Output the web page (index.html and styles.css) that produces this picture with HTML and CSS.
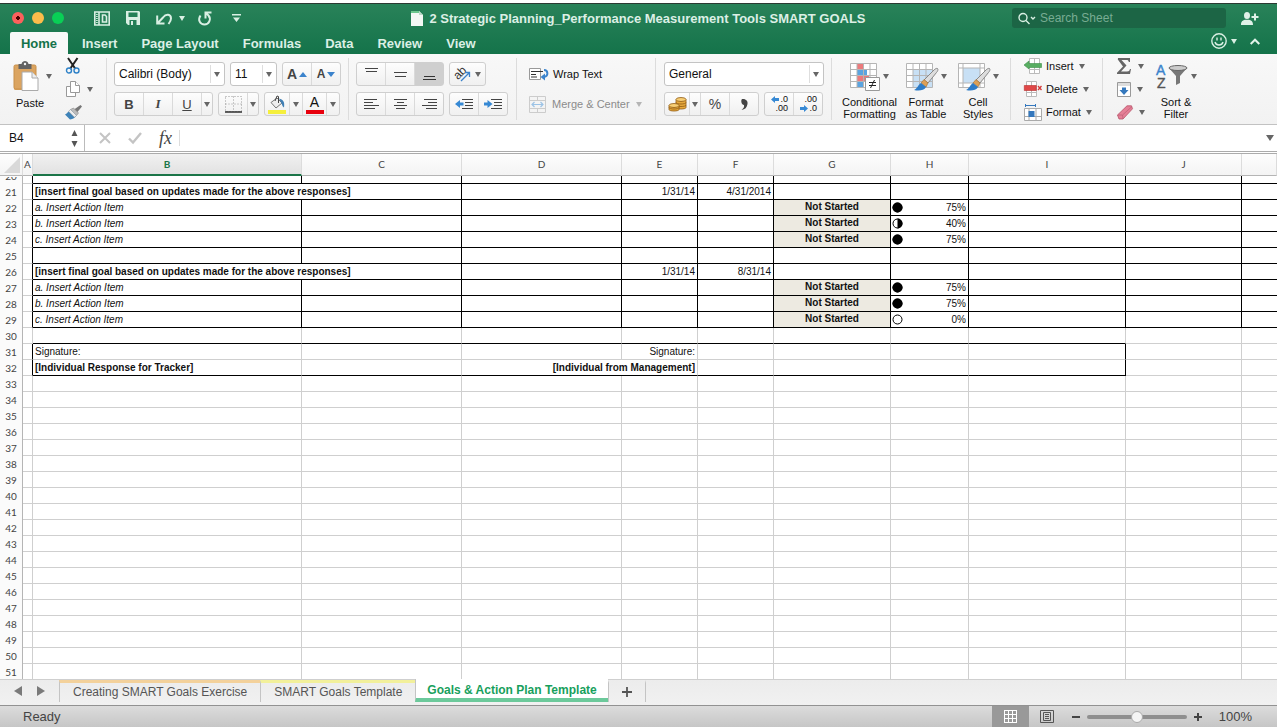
FILE: index.html
```html
<!DOCTYPE html>
<html lang="en">
<head>
    <meta charset="UTF-8">
    <meta name="viewport" content="width=device-width, initial-scale=1.0">
    <title>2 Strategic Planning_Performance Measurement Tools SMART GOALS</title>
    <link rel="stylesheet" href="styles.css">
</head>
<body>
<div class="app">
    <header class="header">
        <div class="titlebar">
            <div class="tools">
                <div class="lights">
                    <button class="light red" aria-label="Close"></button>
                    <button class="light yellow" aria-label="Minimize"></button>
                    <button class="light green" aria-label="Zoom window"></button>
                </div>
                <button class="quick" aria-label="Gallery">
                    <svg width="16" height="15" viewBox="0 0 16 15" fill="none" stroke="#d9efe3" stroke-width="1.6"><path d="M.8 1h14.4v13H.8zM5 1v13M8.500 4h2.500l1.500 1.500V11h-4z"/><path d="M2.900 3v9" stroke-dasharray="1 1"/></svg>
                </button>
                <button class="quick" aria-label="Save">
                    <svg width="14" height="14" viewBox="0 0 14 14"><path d="M0 0h13l1 1v13H2l-2-2z" fill="#d9efe3"/><path d="M2.500 1.500h9v4.500h-9zM3.500 9h7v5h-7z" fill="#237f56"/><path d="M5 10h2v4H5z" fill="#d9efe3"/></svg>
                </button>
                <button class="quick undo" aria-label="Undo">
                    <svg width="16" height="13" viewBox="0 0 16 13" fill="none" stroke="#d9efe3" stroke-width="2"><path d="M1.200 3.500v8h7.300M1.800 11L7 5.500C10 1.500 15 2 15 6.500c0 2-1 3.500-2.500 5.500"/></svg>
                    <i class="caret"></i>
                </button>
                <button class="quick" aria-label="Redo">
                    <svg width="14" height="15" viewBox="0 0 14 15" fill="none" stroke="#d9efe3" stroke-width="2"><path d="M2.500 4.500C-.5 9 2 13.500 6.500 13.500S13.500 8 10.500 4.500L7.500 1.500M13.500 1.500h-6v6"/></svg>
                </button>
                <button class="quick more" aria-label="Customize toolbar">
                    <svg width="9" height="8" viewBox="0 0 9 8"><path d="M0 0h9v1.500H0zM1 3.500h7L4.500 8z" fill="#d9efe3"/></svg>
                </button>
            </div>
            <div class="title">
                <svg width="12" height="15" viewBox="0 0 12 15"><path d="M0 0h8l4 4v11H0z" fill="#f4f8f5"/><path d="M0 0h8v2H0z" fill="#6cc78e"/><path d="M8 0v4h4z" fill="#bcd9c8"/></svg>
                <span>2 Strategic Planning_Performance Measurement Tools SMART GOALS</span>
            </div>
            <div class="right-tools">
                <div class="search">
                    <svg width="18" height="13" viewBox="0 0 18 13" fill="none" stroke="#d9efe3" stroke-width="1.400"><circle cx="5" cy="5.500" r="4"/><path d="M8 8.500l3.500 3.500M13 5l2 2 2-2"/></svg>
                    <input type="text" placeholder="Search Sheet" aria-label="Search Sheet">
                </div>
                <button class="share" aria-label="Share">
                    <svg width="18" height="13" viewBox="0 0 18 13" fill="#e0f1e8"><ellipse cx="6" cy="3.500" rx="3" ry="3.500"/><path d="M0 13c0-4 2-4.500 4-5.200h4c2 .7 4 1.200 4 5.200z"/><path d="M13 1.500h2v2.500h2.500v2H15v2.500h-2V6h-2.500V4H13z"/></svg>
                </button>
            </div>
        </div>
        <nav class="tabs">
            <button class="tab active">Home</button>
            <button class="tab">Insert</button>
            <button class="tab">Page Layout</button>
            <button class="tab">Formulas</button>
            <button class="tab">Data</button>
            <button class="tab">Review</button>
            <button class="tab">View</button>
            <div class="tabs-right">
                <button class="quick" aria-label="Feedback">
                    <svg width="16" height="16" viewBox="0 0 16 16" fill="none" stroke="#d9efe3" stroke-width="1.400"><circle cx="8" cy="8" r="7.200"/><path d="M4 9c1 4 7 4 8 0M6 4.500v3M10 4.500v3"/></svg>
                    <i class="caret"></i>
                </button>
                <button class="quick" aria-label="Collapse ribbon">
                    <svg width="10" height="7" viewBox="0 0 10 7" fill="none" stroke="#e3f3ea" stroke-width="2"><path d="M.7 6L5 1.700 9.300 6"/></svg>
                </button>
            </div>
        </nav>
    </header>

    <section class="ribbon">
        <div class="group clipboard">
            <div class="big">
                <button class="plain">
                    <span class="art"><svg width="25" height="30" viewBox="0 0 25 30"><rect x="0" y="4" width="22" height="25" rx="1.500" fill="#dba460"/><rect x="0" y="4" width="22" height="24" rx="1.500" fill="none" stroke="#c88f48"/><path d="M4.500 3h3C8 .8 9.500 0 11 0s3 .8 3.500 3h3v5h-13z" fill="#636363"/><circle cx="11" cy="3" r="1.200" fill="#f5f5f5"/><path d="M8 11h10l6 6v12.500H8z" fill="#fff" stroke="#aaa"/><path d="M18 11v6h6" fill="#eee" stroke="#aaa"/></svg></span>
                    <span class="label">Paste</span>
                </button>
                <i class="caret"></i>
            </div>
            <div class="stack">
                <button class="plain" aria-label="Cut"><svg width="16" height="16" viewBox="0 0 16 16" fill="none"><path d="M3 0l7.500 11M12.500 0L5 11" stroke="#222" stroke-width="2"/><circle cx="4" cy="12.500" r="2.500" stroke="#2f82c8" stroke-width="1.400"/><circle cx="11.500" cy="12.500" r="2.500" stroke="#2f82c8" stroke-width="1.400"/></svg></button>
                <button class="plain" aria-label="Copy"><svg width="16" height="16" viewBox="0 0 16 16" fill="#fff" stroke="#999"><path d="M1.500 5.500h5l4 4v6h-9z"/><path d="M5.500.5h5l4 4v7h-9z"/><path d="M10.500.5v4h4"/></svg><i class="caret"></i></button>
                <button class="plain" aria-label="Format painter"><svg width="17" height="15" viewBox="0 0 17 15"><path d="M15.500 0L17 1.500l-5 6-3-3z" fill="#777"/><path d="M5.500 4.500l3-1.500 5 5-2 2.500z" fill="#bbb" stroke="#888" stroke-width=".6"/><path d="M5.500 4.500l6 6C10 13 8 14 5 14.500L0 9.500c2-1 3-2.500 5.500-5z" fill="#3f83b8"/><path d="M5.500 4.500l6 6-2 1.800-6-6z" fill="#eee" stroke="#999" stroke-width=".5"/></svg></button>
            </div>
        </div>

        <div class="group font">
            <div class="row">
                <span class="combo family"><select aria-label="Font"><option>Calibri (Body)</option></select><i class="caret"></i></span>
                <span class="combo size"><select aria-label="Font size"><option>11</option></select><i class="caret"></i></span>
                <div class="btns">
                    <button aria-label="Grow font"><span class="grow">A</span><svg width="8" height="5" viewBox="0 0 8 5"><path d="M0 5l4-5 4 5z" fill="#3b83cc"/></svg></button>
                    <button aria-label="Shrink font"><span class="shrink">A</span><svg width="8" height="5" viewBox="0 0 8 5"><path d="M0 0h8L4 5z" fill="#3b83cc"/></svg></button>
                </div>
            </div>
            <div class="row">
                <div class="btns">
                    <button class="bold">B</button>
                    <button class="italic">I</button>
                    <button class="underline">U</button>
                    <button class="drop" aria-label="Underline options"><i class="caret"></i></button>
                </div>
                <div class="btns">
                    <button aria-label="Borders"><svg width="17" height="17" viewBox="0 0 17 17" fill="none" stroke="#999"><path d="M.5.5h16v15H.5zM8.500.5v15M.5 8h16" stroke-dasharray="1 2"/><path d="M0 16h17" stroke="#222" stroke-width="1.400"/></svg></button>
                    <button class="drop" aria-label="Border options"><i class="caret"></i></button>
                </div>
                <div class="btns colors">
                    <button aria-label="Fill color"><svg width="18" height="19" viewBox="0 0 18 19"><path d="M3 7.500L9 3l5 5-6 5z" fill="#eee" stroke="#777"/><path d="M7 6l2-5 1.500.5V8" fill="none" stroke="#444"/><path d="M11 3.500c4 1 6 3 5 9-2-1-2-4-3-5z" fill="#4180b5"/><path d="M0 15h18v4H0z" fill="#f5ef3c"/></svg></button>
                    <button class="drop" aria-label="Fill color options"><i class="caret"></i></button>
                    <button class="text-color" aria-label="Font color"><span>A</span></button>
                    <button class="drop" aria-label="Font color options"><i class="caret"></i></button>
                </div>
            </div>
        </div>

        <div class="group align">
            <div class="row">
                <div class="btns">
                    <button aria-label="Top align"><svg width="13" height="14" viewBox="0 0 13 14" stroke="#444"><path d="M0 1.500h13M1 4.500h11"/></svg></button>
                    <button aria-label="Middle align"><svg width="13" height="14" viewBox="0 0 13 14" stroke="#444"><path d="M0 5.500h13M1 9.500h11"/></svg></button>
                    <button class="pressed" aria-label="Bottom align"><svg width="13" height="14" viewBox="0 0 13 14" stroke="#333"><path d="M1 9.500h11M0 12.500h13"/></svg></button>
                </div>
                <div class="btns">
                    <button class="orient" aria-label="Orientation"><svg width="18" height="18" viewBox="0 0 18 18"><text x="0" y="12" transform="rotate(-45 6 9)" font-family="Liberation Sans" font-size="12" fill="#333">ab</text><path d="M7 16l8-8M11 7.500h4.500V12" fill="none" stroke="#3b83cc" stroke-width="1.300"/></svg><i class="caret"></i></button>
                </div>
            </div>
            <div class="row">
                <div class="btns">
                    <button aria-label="Align left"><svg width="15" height="12" viewBox="0 0 15 12" stroke="#444"><path d="M0 1.500h13M0 4.500h9M0 7.500h15M0 10.500h11"/></svg></button>
                    <button aria-label="Center"><svg width="15" height="12" viewBox="0 0 15 12" stroke="#444"><path d="M1 1.500h13M4 4.500h7M1 7.500h13M3 10.500h9"/></svg></button>
                    <button aria-label="Align right"><svg width="15" height="12" viewBox="0 0 15 12" stroke="#444"><path d="M2 1.500h13M6 4.500h9M0 7.500h15M4 10.500h11"/></svg></button>
                </div>
                <div class="btns">
                    <button aria-label="Decrease indent"><svg width="18" height="12" viewBox="0 0 18 12"><path d="M7 1.500h11M10 4.500h8M10 7.500h8M7 10.500h11" stroke="#444"/><path d="M0 6l5-4v2.500h3.500v3H5V10z" fill="#3789d4"/></svg></button>
                    <button aria-label="Increase indent"><svg width="18" height="12" viewBox="0 0 18 12"><path d="M7 1.500h11M10 4.500h8M10 7.500h8M7 10.500h11" stroke="#444"/><path d="M8.500 6l-5-4v2.500H0v3h3.500V10z" fill="#3789d4"/></svg></button>
                </div>
            </div>
        </div>

        <div class="group wrap">
            <button class="plain line"><svg width="20" height="14" viewBox="0 0 20 14" fill="none"><path d="M.5 1.500h11v11H.5z" fill="#fff" stroke="#999"/><path d="M2 4.500h12M2 7.500h5M2 10h6" stroke="#333"/><path d="M15 3c4 0 5 6 0 7" stroke="#3b83cc" stroke-width="2"/><path d="M11.500 10L16 6.500v7z" fill="#3b83cc"/></svg>Wrap Text</button>
            <button class="plain line muted" disabled><svg width="17" height="17" viewBox="0 0 17 17" fill="none"><path d="M.5.5h16v16H.5zM.5 4.500h16M.5 12.500h16M8.500.5v4M8.500 12.500v4" stroke="#ccc"/><path d="M3 8.500h11M5.500 6L3 8.500 5.500 11M11.500 6L14 8.500 11.500 11" stroke="#9cc3e6" stroke-width="1.200"/></svg>Merge &amp; Center<i class="caret"></i></button>
        </div>

        <div class="group number">
            <div class="row">
                <span class="combo format"><select aria-label="Number format"><option>General</option></select><i class="caret"></i></span>
            </div>
            <div class="row">
                <div class="btns">
                    <button class="money" aria-label="Currency"><svg width="19" height="15" viewBox="0 0 19 15" fill="#e7a93c" stroke="#8f5a14" stroke-width=".8"><path d="M8 2.500v8c0 2 10 2 10 0v-8"/><path d="M8 5.500c0 2 10 2 10 0M8 8c0 2 10 2 10 0" fill="none"/><ellipse cx="13" cy="2.500" rx="5" ry="2" fill="#f8cf76"/><path d="M1 8.500v4c0 2 10 2 10 0v-4"/><path d="M1 10.500c0 2 10 2 10 0" fill="none"/><ellipse cx="6" cy="8.500" rx="5" ry="2" fill="#f8cf76"/></svg></button>
                    <button class="drop" aria-label="Currency options"><i class="caret"></i></button>
                    <button class="percent">%</button>
                    <button aria-label="Comma style"><svg width="7" height="11" viewBox="0 0 7 11"><path d="M1 0c4-.5 6 2 5.500 5C6 8.500 4 10.500.5 11c2-1.500 3-3 2.500-5C.5 6-.5 1.500 1 0z" fill="#444"/></svg></button>
                </div>
                <div class="btns decimals">
                    <button aria-label="Increase decimal"><span><svg width="8" height="7" viewBox="0 0 8 7"><path d="M0 3.500L4 0v2h4v3H4v2z" fill="#3789d4"/></svg>.0</span><span>.00</span></button>
                    <button aria-label="Decrease decimal"><span>.00</span><span><svg width="8" height="7" viewBox="0 0 8 7"><path d="M8 3.500L4 0v2H0v3h4v2z" fill="#3789d4"/></svg>.0</span></button>
                </div>
            </div>
        </div>

        <div class="group styles">
            <button class="plain tile">
                <span class="art"><svg width="30" height="28" viewBox="0 0 30 28"><path d="M.5.5h26v24H.5z" fill="#fff"/><path d="M7 1h6v5H7zM7 12h12v6H7z" fill="#ec7a7c"/><path d="M7 6h10v6H7zM7 18h6v6H7z" fill="#5ba4e0"/><path d="M.5.5h26v24H.5zM.5 6.500h26M.5 12.500h26M.5 18.500h26M7 .5v24M13.500.5v24M20 .5v24" fill="none" stroke="#b5b5b5"/><path d="M15.500 14.500h14v13h-14z" fill="#fff" stroke="#999"/><path d="M19 19.500h7M19 22.500h7M24.500 17l-4 8" stroke="#222" fill="none"/></svg><i class="caret"></i></span>
                <span class="label">Conditional<br>Formatting</span>
            </button>
            <button class="plain tile narrow">
                <span class="art"><svg width="32" height="28" viewBox="0 0 32 28"><path d="M.5.5h26v24H.5z" fill="#fff"/><path d="M7 7h19v18H7z" fill="#c8e0f5"/><path d="M.5.5h26v24H.5zM.5 6.500h26M.5 12.500h26M.5 18.500h26M7 .5v24M13.500.5v24M20 .5v24" fill="none" stroke="#b5b5b5"/><path d="M31.500 5.500c1 1 0 3-1 4L22 20l-4-3L28 7c1-1 2.500-2 3.500-1.500z" fill="#ddd" stroke="#888"/><path d="M18 16.500l4 3.500-2 4-5-4z" fill="#dda056" stroke="#9f6b2c" stroke-width=".6"/><path d="M15 20l5 4c-2 4-8 4-12 3 3-1 4-5 7-7z" fill="#2d7cc8"/></svg><i class="caret"></i></span>
                <span class="label">Format<br>as Table</span>
            </button>
            <button class="plain tile narrow">
                <span class="art"><svg width="32" height="28" viewBox="0 0 32 28"><path d="M.5.5h26v24H.5z" fill="#fff"/><path d="M5 5h17v15H5z" fill="#c8e0f5"/><path d="M.5.5h26v24H.5zM.5 5h26M.5 20h26M5 .5v24M22 .5v24" fill="none" stroke="#b5b5b5"/><path d="M31.500 5.500c1 1 0 3-1 4L22 20l-4-3L28 7c1-1 2.500-2 3.500-1.500z" fill="#ddd" stroke="#888"/><path d="M18 16.500l4 3.500-2 4-5-4z" fill="#dda056" stroke="#9f6b2c" stroke-width=".6"/><path d="M15 20l5 4c-2 4-8 4-12 3 3-1 4-5 7-7z" fill="#2d7cc8"/></svg><i class="caret"></i></span>
                <span class="label">Cell<br>Styles</span>
            </button>
        </div>

        <div class="group cells">
            <button class="plain line"><svg width="18" height="16" viewBox="0 0 18 16"><path d="M5.500.5h10v15h-10zM10.500.5v15M5.500 11.500h10" fill="#fff" stroke="#bbb"/><path d="M0 7l5-4v2.500h12.500v4H5v1.500z" fill="#58ad62" stroke="#3c8f48" stroke-width=".6"/></svg>Insert<i class="caret"></i></button>
            <button class="plain line"><svg width="18" height="16" viewBox="0 0 18 16"><path d="M2.500.5h10v15h-10zM7.500.5v15M2.500 11.500h10" fill="#fff" stroke="#bbb"/><path d="M.3 4.500h12v5H.3z" fill="#e04848" stroke="#b52c2c" stroke-width=".6"/><path d="M14 5l3.500 4M17.500 5L14 9" stroke="#d43838" stroke-width="1.300"/></svg>Delete<i class="caret"></i></button>
            <button class="plain line"><svg width="18" height="17" viewBox="0 0 18 17"><path d="M.5 4.500h17v12H.5zM.5 12.500h17M5 4.500v12M12 4.500v12" fill="#fff" stroke="#aaa"/><path d="M4.500 7h6v6h-6z" fill="#3578bd"/><path d="M1.500 0v3M11.500 0v3M2 1.500h9" stroke="#3578bd"/></svg>Format<i class="caret"></i></button>
        </div>

        <div class="group editing">
            <div class="stack">
                <button class="plain" aria-label="AutoSum"><svg width="15" height="16" viewBox="0 0 15 16"><path d="M1 0h12v4h-1.200C11.500 2.500 11 2 9.500 2H4.500l5 5.500-5.500 6h6c2 0 2.500-.8 3-2.500H14L13 16H0v-1.200L6 8.500.8 1.500z" fill="#666"/></svg><i class="caret"></i></button>
                <button class="plain" aria-label="Fill"><svg width="14" height="15" viewBox="0 0 14 15"><path d="M.5.5h13v14H.5z" fill="#fff" stroke="#999"/><path d="M1 1h12v3H1z" fill="#ddd"/><path d="M5 5.500h4V8h2.500L7 13 2.500 8H5z" fill="#3578bd"/></svg><i class="caret"></i></button>
                <button class="plain" aria-label="Clear"><svg width="16" height="15" viewBox="0 0 16 15"><path d="M.5 10L10 .8h4.500l1 3L6 14H2z" fill="#e57f96" stroke="#b65368" stroke-width=".8"/><path d="M.5 10h5L15 1.500M5.500 10l.5 4" fill="none" stroke="#c0637a" stroke-width=".8"/></svg><i class="caret"></i></button>
            </div>
            <button class="plain tile sort">
                <span class="art"><svg width="32" height="27" viewBox="0 0 32 27"><text x="0" y="12" font-family="Liberation Sans" font-size="14" stroke="#3b83cc" stroke-width=".4" fill="#3b83cc">A</text><text x="1" y="25" font-family="Liberation Sans" font-size="14" stroke="#555" stroke-width=".4" fill="#555">Z</text><path d="M13 5l7 8v9l4-2v-7l7-8z" fill="#777"/><ellipse cx="22" cy="5" rx="9" ry="2.500" fill="#ccc" stroke="#666"/></svg><i class="caret"></i></span>
                <span class="label">Sort &amp;<br>Filter</span>
            </button>
        </div>
    </section>

    <div class="formula-bar">
        <input class="name-box" type="text" value="B4" aria-label="Name box">
        <svg class="stepper" width="7" height="17" viewBox="0 0 7 17"><path d="M.5 6L3.500 0l3 6zM.5 11h6l-3 6z" fill="#555"/></svg>
        <div class="formula-tools">
            <button class="plain" aria-label="Cancel"><svg width="12" height="12" viewBox="0 0 12 12"><path d="M1 1l10 10M11 1L1 11" stroke="#c4c4c4" stroke-width="2"/></svg></button>
            <button class="plain" aria-label="Enter"><svg width="14" height="12" viewBox="0 0 14 12"><path d="M1 6.500L5 10.500 13 1" stroke="#c4c4c4" stroke-width="2.400" fill="none"/></svg></button>
            <button class="plain fx">fx</button>
        </div>
        <input class="formula" type="text" aria-label="Formula">
        <i class="caret large"></i>
    </div>

    <main class="sheet">
        <table>
            <colgroup>
                <col class="c-num"><col class="c-a"><col class="c-b"><col class="c-c"><col class="c-d"><col class="c-e"><col class="c-f"><col class="c-g"><col class="c-h"><col class="c-i"><col class="c-j"><col>
            </colgroup>
            <thead>
                <tr>
                    <th class="corner"><svg width="16" height="16" viewBox="0 0 16 16"><path d="M16 0v16H0z" fill="#d9d9d9"/></svg></th>
                    <th>A</th><th class="selected">B</th><th>C</th><th>D</th><th>E</th><th>F</th><th>G</th><th>H</th><th>I</th><th>J</th><th></th>
                </tr>
            </thead>
            <tbody id="rows"></tbody>
        </table>
    </main>

    <div class="sheet-tabs">
        <div class="arrows">
            <button class="plain" aria-label="Previous sheet"><svg width="8" height="10" viewBox="0 0 8 10"><path d="M8 0v10L0 5z" fill="#7a7a7a"/></svg></button>
            <button class="plain" aria-label="Next sheet"><svg width="8" height="10" viewBox="0 0 8 10"><path d="M0 0v10l8-5z" fill="#7a7a7a"/></svg></button>
        </div>
        <button class="sheet-tab orange">Creating SMART Goals Exercise</button>
        <button class="sheet-tab lemon">SMART Goals Template</button>
        <button class="sheet-tab current">Goals &amp; Action Plan Template</button>
        <button class="sheet-tab add" aria-label="Add sheet"><svg width="10" height="10" viewBox="0 0 10 10"><path d="M0 5h10M5 0v10" stroke="#555" stroke-width="1.800"/></svg></button>
    </div>

    <footer class="status">
        <span class="ready">Ready</span>
        <button class="view on" aria-label="Normal view"><svg width="13" height="13" viewBox="0 0 13 13"><path d="M0 0h13v13H0z" fill="#fff"/><path d="M1 1h3v3H1zM5 1h3v3H5zM9 1h3v3H9zM1 5h3v3H1zM5 5h3v3H5zM9 5h3v3H9zM1 9h3v3H1zM5 9h3v3H5zM9 9h3v3H9z" fill="#999"/></svg></button>
        <button class="view" aria-label="Page layout view"><svg width="14" height="13" viewBox="0 0 14 13" fill="none" stroke="#555"><path d="M.5.5h13v12H.5zM3.500 2.500h7v8h-7zM5 4.500h4M5 6.500h4M5 8.500h4"/></svg></button>
        <button class="plain zoom-btn" aria-label="Zoom out"><svg width="8" height="8" viewBox="0 0 8 8"><path d="M0 4h8" stroke="#444" stroke-width="2"/></svg></button>
        <input type="range" min="0" max="100" value="50" aria-label="Zoom">
        <button class="plain zoom-btn" aria-label="Zoom in"><svg width="8" height="8" viewBox="0 0 8 8"><path d="M0 4h8M4 0v8" stroke="#444" stroke-width="2"/></svg></button>
        <span class="percent-label">100%</span>
    </footer>
</div>

<script>
    const columns = "ABCDEFGHIJK".split("");
    const goal = "[insert final goal based on updates made for the above responses]";

    const cells = {
        21: { B: goal, E: "1/31/14", F: "4/31/2014" },
        22: { B: "a. Insert Action Item", G: "Not Started", H: 75 },
        23: { B: "b. Insert Action Item", G: "Not Started", H: 40 },
        24: { B: "c. Insert Action Item", G: "Not Started", H: 75 },
        26: { B: goal, E: "1/31/14", F: "8/31/14" },
        27: { B: "a. Insert Action Item", G: "Not Started", H: 75 },
        28: { B: "b. Insert Action Item", G: "Not Started", H: 75 },
        29: { B: "c. Insert Action Item", G: "Not Started", H: 0 },
        31: { B: "Signature:", E: "Signature:" },
        32: { B: "[Individual Response for Tracker]", D: "[Individual from Management]" }
    };

    // text in these cells runs over the next column
    const spans = { B21: 2, B26: 2, D32: 2 };

    function progress(value) {
        let fill = "";
        if (value > 60) fill = '<circle cx="5.5" cy="5.5" r="5"/>';
        else if (value > 0) fill = '<path d="M5.5 .5a5 5 0 0 1 0 10z"/>';
        return '<svg class="pie" width="11" height="11" viewBox="0 0 11 11"><circle cx="5.5" cy="5.5" r="4.5" fill="#fff" stroke="#000"/>' + fill + '</svg>' + value + "%";
    }

    function rowClass(n) {
        if (n === 20) return "boxed clipped";
        if (n === 21 || n === 26) return "boxed goal";
        if (n < 30) return "boxed action";
        if (n === 30) return "before-sign";
        if (n === 31) return "sign";
        if (n === 32) return "sign last";
        return "";
    }

    let html = "";
    for (let n = 20; n <= 51; n++) {
        html += `<tr class="${rowClass(n)}"><th><span>${n}</span></th>`;
        for (let i = 0; i < columns.length; i++) {
            const col = columns[i];
            const value = cells[n] ? cells[n][col] : undefined;
            const span = spans[col + n] || 1;
            let cls = "col-" + col.toLowerCase();
            if (col === "G" && value) cls += " state";
            let text = value === undefined ? "" : value;
            if (col === "H" && value !== undefined) text = progress(value);
            html += `<td class="${cls}"${span > 1 ? ` colspan="${span}"` : ""}>${text}</td>`;
            i += span - 1;
        }
        html += "</tr>";
    }
    document.getElementById("rows").innerHTML = html;
</script>
</body>
</html>
```
FILE: styles.css
```css
* {
    box-sizing: border-box;
}
body {
    margin: 0;
    font-family: "Liberation Sans", Arial, sans-serif;
    font-size: 12px;
    color: #111;
    background-color: white;
}
button, input, select {
    font-family: inherit;
    font-size: inherit;
    color: inherit;
    margin: 0;
    padding: 0;
    border: none;
    background: none;
}
svg {
    display: block;
    flex: none;
    overflow: visible;
}
.app {
    height: 100vh;
    display: flex;
    flex-direction: column;
    padding-top: 3px;
    overflow: hidden;
}
.caret {
    flex: none;
    width: 0;
    height: 0;
    border: 3px solid transparent;
    border-top: 5px solid #666;
    border-bottom: none;
}
.caret.large {
    border-width: 6px 4px 0;
}

/* title bar and ribbon tabs */
.header {
    flex: none;
    border-top: 1px solid #2b3a33;
    background: linear-gradient(#298259, #14734a);
    color: #dcefe5;
}
.titlebar {
    height: 28px;
    display: grid;
    grid-template-columns: 1fr auto 1fr;
    align-items: center;
}
.tools {
    display: flex;
    align-items: center;
    gap: 16px;
    padding-left: 12px;
}
.lights {
    display: flex;
    gap: 8px;
    width: 66px;
}
.light {
    width: 12px;
    height: 12px;
    border-radius: 50%;
}
.light.red {
    background: radial-gradient(#4d0000 0 2px, #fc605c 2px);
}
.light.yellow {
    background-color: #fdbc4b;
}
.light.green {
    background-color: #09cf56;
}
.quick {
    display: flex;
    align-items: center;
    gap: 7px;
}
.quick .caret {
    border-top-color: #d9efe3;
}
.undo {
    margin-right: -3px;
}
.more {
    margin-left: 4px;
}
.title {
    display: flex;
    align-items: center;
    gap: 6px;
    font-size: 13px;
    font-weight: bold;
}
.right-tools {
    display: flex;
    justify-content: flex-end;
    align-items: center;
    gap: 15px;
    padding-right: 18px;
}
.search {
    display: flex;
    align-items: center;
    gap: 4px;
    width: 214px;
    height: 20px;
    padding-left: 6px;
    border-radius: 3px;
    background-color: #1c6545;
}
.search input {
    flex: 1;
    min-width: 0;
    font-size: 12px;
    outline: none;
}
.search input::placeholder {
    color: #78ac93;
    opacity: 1;
}
.tabs {
    display: flex;
    height: 22px;
    padding-left: 10px;
}
.tab {
    padding: 0 12px;
    font-size: 13px;
    font-weight: bold;
}
.tab.active {
    width: 58px;
    padding: 0;
    margin-right: 2px;
    border-radius: 2px 2px 0 0;
    background-color: #f8f8f8;
    color: #14734a;
}
.tabs-right {
    margin-left: auto;
    display: flex;
    align-items: center;
    gap: 13px;
    padding: 0 17px 4px 0;
}
.tabs-right .quick {
    gap: 4px;
}

/* ribbon */
.ribbon {
    flex: none;
    display: flex;
    height: 71px;
    padding: 4px 0;
    border-bottom: 1px solid #c2c2c2;
    background: linear-gradient(#f8f8f8, #f2f2f2);
    font-size: 11px;
}
.group {
    flex: none;
    border-right: 1px solid #dcdcdc;
    padding-left: 7px;
}
.group:last-child {
    border-right: none;
}
.plain {
    display: flex;
    align-items: center;
}
.row {
    display: flex;
    gap: 5px;
    margin-top: 4px;
    height: 24px;
}
.row + .row {
    margin-top: 6px;
}
.clipboard {
    width: 107px;
    padding-left: 14px;
    display: flex;
}
.big {
    display: flex;
    width: 51px;
}
.big .plain {
    flex-direction: column;
    width: 32px;
}
.big .caret {
    margin-top: 16px;
}
.big .art {
    height: 36px;
    padding: 3px 7px 0 0;
}
.label {
    margin-top: 3px;
    line-height: 12px;
    text-align: center;
}
.stack {
    display: flex;
    flex-direction: column;
    justify-content: space-between;
    height: 62px;
}
.stack .plain {
    gap: 6px;
    height: 16px;
}
.btns {
    display: flex;
    border: 1px solid #cfcfcf;
    border-radius: 3px;
    background: linear-gradient(#fdfdfd, #f0f0f0);
}
.btns button {
    width: 29px;
    display: flex;
    align-items: center;
    justify-content: center;
    border-left: 1px solid #dadada;
}
.btns button:first-child {
    width: 28px;
    border-left: none;
}
.btns .drop {
    width: 11px;
}
.btns .pressed {
    background-color: #cfcfcf;
}
.combo {
    display: flex;
    align-items: center;
    border: 1px solid #c4c4c4;
    border-radius: 3px;
    background-color: white;
    padding-right: 4px;
}
.combo select {
    flex: 1;
    min-width: 0;
    height: 18px;
    appearance: none;
    padding-left: 4px;
    font-size: 12px;
    border-right: 1px solid #dedede;
    margin-right: 3px;
}
.family {
    width: 111px;
}
.size {
    width: 47px;
}
.format {
    width: 160px;
}
.font {
    width: 242px;
}
.grow, .shrink {
    color: #444;
    font-weight: bold;
    font-size: 14px;
    margin-right: 2px;
}
.shrink {
    font-size: 12px;
}
.btns .bold, .btns .italic, .btns .underline {
    font-size: 13px;
    font-weight: bold;
    color: #444;
}
.btns .italic {
    font-family: "Liberation Serif", serif;
    font-style: italic;
}
.btns .underline {
    font-weight: normal;
    text-decoration: underline;
}
.colors .drop {
    width: 13px;
}
.btns.colors button:first-child, .colors .text-color {
    width: 24px;
}
.text-color span {
    width: 18px;
    border-bottom: 4px solid #e8000d;
    font-size: 14px;
    line-height: 15px;
}
.align {
    width: 168px;
}
.btns button.orient {
    width: 35px;
    gap: 3px;
}
.wrap {
    width: 139px;
    padding: 7px 0 0 12px;
}
.line {
    gap: 4px;
    height: 18px;
}
.wrap .line + .line {
    margin-top: 12px;
}
.muted {
    gap: 6px;
    color: #8b8b8b;
}
.muted .caret {
    border-top-color: #b5b5b5;
}
.number {
    width: 176px;
    padding-left: 8px;
}
.btns button.money {
    width: 24px;
}
.btns .percent {
    font-size: 14px;
    color: #444;
}
.btns.decimals button {
    flex-direction: column;
    font-size: 9px;
    line-height: 9px;
    align-items: flex-end;
    padding-right: 5px;
}
.decimals span {
    display: flex;
    align-items: center;
    gap: 1px;
}
.styles {
    width: 179px;
    display: flex;
}
.tile {
    flex-direction: column;
    align-items: center;
    justify-content: flex-start;
    width: 61px;
}
.tile .art {
    display: flex;
    align-items: center;
    justify-content: center;
    gap: 3px;
    height: 36px;
    padding-top: 3px;
}
.tile .label {
    margin-top: 4px;
}
.narrow {
    width: 52px;
}
.cells {
    width: 92px;
    padding-left: 13px;
}
.cells .line {
    height: 16px;
    margin-bottom: 7px;
}
.cells .caret {
    margin-left: 1px;
}
.editing {
    display: flex;
    padding-left: 14px;
}
.editing .stack {
    width: 38px;
}
.sort {
    width: 42px;
}

/* formula bar */
.formula-bar {
    flex: none;
    display: flex;
    align-items: center;
    height: 29px;
    border-bottom: 3px double #ababab;
    padding-right: 3px;
}
.name-box {
    width: 71px;
    padding-left: 9px;
}
.formula-tools {
    display: flex;
    align-items: center;
    gap: 17px;
    height: 26px;
    margin-left: 6px;
    padding: 0 7px 0 14px;
    border-left: 1px solid #bbb;
}
.fx {
    font: italic 18px "Liberation Serif", serif;
    color: #444;
}
.formula {
    flex: 1;
    height: 16px;
    border-left: 1px solid #ddd;
}

/* grid */
.sheet {
    flex: 1;
    min-height: 0;
    overflow: hidden;
}
table {
    width: 100%;
    table-layout: fixed;
    border-collapse: separate;
    border-spacing: 0;
    font-size: 10px;
    line-height: 15px;
}
.c-num { width: 23px; }
.c-a { width: 10px; }
.c-b { width: 269px; }
.c-c, .c-d { width: 160px; }
.c-e, .c-f { width: 76px; }
.c-g { width: 117px; }
.c-h { width: 78px; }
.c-i { width: 157px; }
.c-j { width: 116px; }
th {
    padding: 0;
    font-family: Lato, sans-serif;
    font-weight: normal;
    color: #444;
}
thead th {
    height: 22px;
    border-right: 1px solid #dcdcdc;
    border-bottom: 1px solid #b5b5b5;
    background: linear-gradient(#fdfdfd, #f4f4f4);
}
.corner svg {
    margin-left: 4px;
}
thead .selected {
    background: linear-gradient(#f1f1f1, #e2e2e2);
    border-bottom: 2px solid #1b7548;
    color: #1b7548;
    font-weight: bold;
}
tbody th {
    border-right: 1px solid #b5b5b5;
    background-color: #fbfbfb;
}
td {
    height: 16px;
    padding: 1px 2px 0;
    line-height: 14px;
    border-right: 1px solid #cfcfcf;
    border-bottom: 1px solid #cfcfcf;
    white-space: nowrap;
    vertical-align: top;
}
td:last-child {
    border-right: none;
}
.boxed td {
    border-color: black;
}
.boxed .col-a {
    border-bottom-color: #cfcfcf;
}
.clipped td {
    height: 8px;
}
.clipped th span {
    display: flex;
    align-items: flex-end;
    justify-content: center;
    height: 7px;
    overflow: hidden;
}
.goal .col-b {
    font-weight: bold;
}
.action .col-b {
    font-style: italic;
}
.col-e, .col-f, .col-h {
    text-align: right;
}
.state {
    padding-top: 0;
    background-color: #edeae1;
    text-align: center;
    font-weight: bold;
}
.pie {
    float: left;
    margin: 1px 0 0 -1px;
}
.before-sign td {
    border-bottom-color: black;
}
.before-sign .col-a, .before-sign .col-j, .before-sign .col-k {
    border-bottom-color: #cfcfcf;
}
.sign .col-a, .sign .col-i {
    border-right-color: black;
}
.last td {
    border-bottom-color: black;
    font-weight: bold;
}
.last .col-a, .last .col-j, .last .col-k {
    border-bottom-color: #cfcfcf;
}
.last .col-d {
    text-align: right;
}

/* sheet tabs */
.sheet-tabs {
    flex: none;
    display: flex;
    height: 26px;
    padding-bottom: 3px;
    border-top: 1px solid #cfcfcf;
    background: linear-gradient(#ececec, #f1f1f1);
    color: #555;
}
.arrows {
    display: flex;
    gap: 15px;
    width: 59px;
    padding-left: 14px;
}
.sheet-tab {
    padding: 0 13px 2px;
    border-left: 1px solid #c4c4c4;
    border-top: 3px solid transparent;
    font-size: 12px;
}
.orange {
    border-top-color: #f3d19b;
}
.lemon {
    border-top-color: #f2f09b;
}
.current {
    margin-top: -1px;
    padding: 3px 11px 0;
    border-top: none;
    border-bottom: 4px solid #6cc99b;
    background-color: white;
    color: #17a05c;
    font-weight: bold;
}
.add {
    border-right: 1px solid #c4c4c4;
}

/* status bar */
.status {
    flex: none;
    display: flex;
    align-items: center;
    height: 22px;
    padding-right: 25px;
    border-top: 1px solid #929292;
    background: linear-gradient(#dcdcdc, #c6c6c6);
    font-size: 13px;
    color: #444;
}
.ready {
    margin-right: auto;
    padding-left: 23px;
}
.view {
    display: flex;
    align-items: center;
    justify-content: center;
    width: 36px;
    height: 21px;
}
.view.on {
    width: 37px;
    background-color: #999;
}
.zoom-btn {
    margin: 0 7px;
}
.status input {
    width: 100px;
    height: 14px;
    appearance: none;
}
.status input::-webkit-slider-runnable-track {
    height: 4px;
    border-radius: 2px;
    background-color: #8f8f8f;
}
.status input::-webkit-slider-thumb {
    appearance: none;
    width: 12px;
    height: 12px;
    margin-top: -4px;
    border: 1px solid #aaa;
    border-radius: 50%;
    background-color: #f5f5f5;
}
.percent-label {
    margin-left: 10px;
}
```
